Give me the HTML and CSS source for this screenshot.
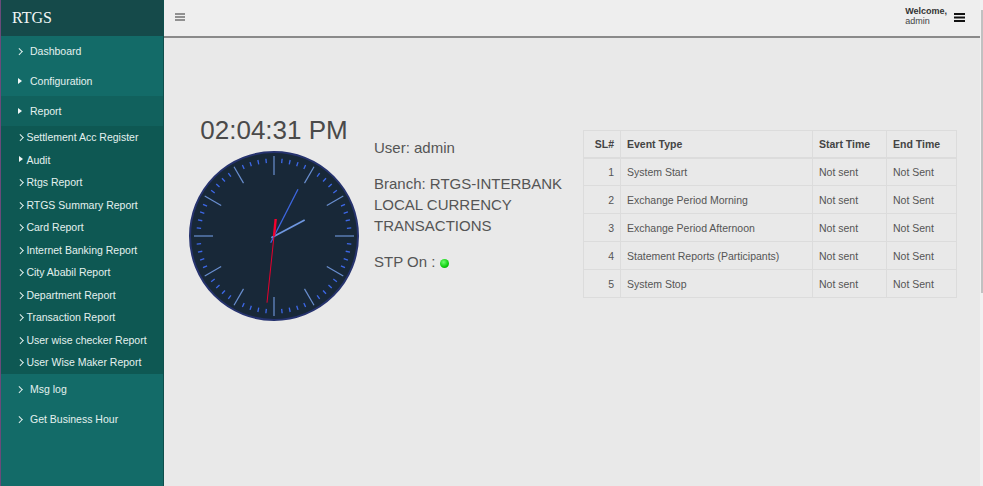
FILE: index.html
```html
<!DOCTYPE html>
<html>
<head>
<meta charset="utf-8">
<title>RTGS</title>
<link rel="stylesheet" href="styles.css">
</head>
<body>
<div class="app">
  <aside class="sidebar">
    <div class="brand">RTGS</div>
    <ul class="menu">
      <li class="item"><span class="chev"></span>Dashboard</li>
      <li class="item"><span class="tri"></span>Configuration</li>
      <li class="group">
        <div class="item"><span class="tri"></span>Report</div>
        <ul class="submenu">
          <li><span class="subchev"></span>Settlement Acc Register</li>
          <li><span class="subtri"></span>Audit</li>
          <li><span class="subchev"></span>Rtgs Report</li>
          <li><span class="subchev"></span>RTGS Summary Report</li>
          <li><span class="subchev"></span>Card Report</li>
          <li><span class="subchev"></span>Internet Banking Report</li>
          <li><span class="subchev"></span>City Ababil Report</li>
          <li><span class="subchev"></span>Department Report</li>
          <li><span class="subchev"></span>Transaction Report</li>
          <li><span class="subchev"></span>User wise checker Report</li>
          <li><span class="subchev"></span>User Wise Maker Report</li>
        </ul>
      </li>
      <li class="item"><span class="chev"></span>Msg log</li>
      <li class="item"><span class="chev"></span>Get Business Hour</li>
    </ul>
  </aside>
  <main class="main">
    <header class="topbar">
      <svg class="burger" width="10" height="8" viewBox="0 0 10 8"><path d="M0 1h10M0 4h10M0 7h10" stroke="#333" stroke-width="1.200"/></svg>
      <div class="welcome">
        <div class="welcome-text"><strong>Welcome,</strong><span>admin</span></div>
        <svg width="11" height="9" viewBox="0 0 11 9"><path d="M0 1h11M0 4.500h11M0 8h11" stroke="#111" stroke-width="1.800"/></svg>
      </div>
    </header>
    <section class="content">
      <div class="clock-col">
        <div class="time">02:04:31 PM</div>
        <svg class="clock" width="172" height="172" viewBox="-86 -86 172 172">
          <defs>
            <line id="minor" x1="0" y1="-77.700" x2="0" y2="-73.300" stroke="#3d68e8" stroke-width="1.300"/>
            <line id="major" x1="0" y1="-80" x2="0" y2="-61" stroke="#6a8fd0" stroke-width="1.200"/>
          </defs>
          <circle r="84" fill="#182838" stroke="#26336e" stroke-width="2"/>
          <use href="#major"/><use href="#major" transform="rotate(30)"/><use href="#major" transform="rotate(60)"/>
          <use href="#major" transform="rotate(90)"/><use href="#major" transform="rotate(120)"/><use href="#major" transform="rotate(150)"/>
          <use href="#major" transform="rotate(180)"/><use href="#major" transform="rotate(210)"/><use href="#major" transform="rotate(240)"/>
          <use href="#major" transform="rotate(270)"/><use href="#major" transform="rotate(300)"/><use href="#major" transform="rotate(330)"/>
          <use href="#minor" transform="rotate(6)"/><use href="#minor" transform="rotate(12)"/><use href="#minor" transform="rotate(18)"/><use href="#minor" transform="rotate(24)"/>
          <use href="#minor" transform="rotate(36)"/><use href="#minor" transform="rotate(42)"/><use href="#minor" transform="rotate(48)"/><use href="#minor" transform="rotate(54)"/>
          <use href="#minor" transform="rotate(66)"/><use href="#minor" transform="rotate(72)"/><use href="#minor" transform="rotate(78)"/><use href="#minor" transform="rotate(84)"/>
          <use href="#minor" transform="rotate(96)"/><use href="#minor" transform="rotate(102)"/><use href="#minor" transform="rotate(108)"/><use href="#minor" transform="rotate(114)"/>
          <use href="#minor" transform="rotate(126)"/><use href="#minor" transform="rotate(132)"/><use href="#minor" transform="rotate(138)"/><use href="#minor" transform="rotate(144)"/>
          <use href="#minor" transform="rotate(156)"/><use href="#minor" transform="rotate(162)"/><use href="#minor" transform="rotate(168)"/><use href="#minor" transform="rotate(174)"/>
          <use href="#minor" transform="rotate(186)"/><use href="#minor" transform="rotate(192)"/><use href="#minor" transform="rotate(198)"/><use href="#minor" transform="rotate(204)"/>
          <use href="#minor" transform="rotate(216)"/><use href="#minor" transform="rotate(222)"/><use href="#minor" transform="rotate(228)"/><use href="#minor" transform="rotate(234)"/>
          <use href="#minor" transform="rotate(246)"/><use href="#minor" transform="rotate(252)"/><use href="#minor" transform="rotate(258)"/><use href="#minor" transform="rotate(264)"/>
          <use href="#minor" transform="rotate(276)"/><use href="#minor" transform="rotate(282)"/><use href="#minor" transform="rotate(288)"/><use href="#minor" transform="rotate(294)"/>
          <use href="#minor" transform="rotate(306)"/><use href="#minor" transform="rotate(312)"/><use href="#minor" transform="rotate(318)"/><use href="#minor" transform="rotate(324)"/>
          <use href="#minor" transform="rotate(336)"/><use href="#minor" transform="rotate(342)"/><use href="#minor" transform="rotate(348)"/><use href="#minor" transform="rotate(354)"/>
          <line x1="-2.700" y1="1.700" x2="30.700" y2="-16" stroke="#6f97e0" stroke-width="1.800"/>
          <line x1="-3.300" y1="6.700" x2="24" y2="-46.700" stroke="#3d66e0" stroke-width="1.300"/>
          <line x1="0" y1="0" x2="-7" y2="66.700" stroke="#e8002d" stroke-width="1"/>
          <line x1="0" y1="0" x2="1.700" y2="-17" stroke="#f5002d" stroke-width="2.400"/>
        </svg>
      </div>
      <div class="info">
        <p>User: admin</p>
        <p>Branch: RTGS-INTERBANK LOCAL CURRENCY TRANSACTIONS</p>
        <p>STP On : <span class="led"></span></p>
      </div>
      <table class="events">
        <thead>
          <tr><th class="num">SL#</th><th class="type">Event Type</th><th class="start">Start Time</th><th>End Time</th></tr>
        </thead>
        <tbody>
          <tr><td class="num">1</td><td>System Start</td><td>Not sent</td><td>Not Sent</td></tr>
          <tr><td class="num">2</td><td>Exchange Period Morning</td><td>Not sent</td><td>Not Sent</td></tr>
          <tr><td class="num">3</td><td>Exchange Period Afternoon</td><td>Not sent</td><td>Not Sent</td></tr>
          <tr><td class="num">4</td><td>Statement Reports (Participants)</td><td>Not sent</td><td>Not Sent</td></tr>
          <tr><td class="num">5</td><td>System Stop</td><td>Not sent</td><td>Not Sent</td></tr>
        </tbody>
      </table>
    </section>
  </main>
  <div class="scrollbar"><div class="thumb"></div></div>
</div>
</body>
</html>
```
FILE: styles.css
```css
* { box-sizing: border-box; }
html, body { margin: 0; height: 100%; overflow: hidden; }
body { font-family: "Liberation Sans", Arial, sans-serif; background: #e9e9e9; color: #444; }
.app { display: flex; height: 486px; }

.sidebar { width: 164px; flex: none; background: #136b68; border-left: 1px solid #6a4a7a; border-right: 1px solid #0e4f4c; color: #e4f1ef; font-size: 10.500px; }
.brand { height: 36px; padding: 0 11px; background: #154a4a; font: 16px/35px "Liberation Serif", serif; color: #f2f7f6; }
.menu, .submenu { list-style: none; margin: 0; padding: 0; }
.item { display: flex; align-items: center; height: 30px; padding-left: 29px; position: relative; }
.chev, .tri, .subchev, .subtri { position: absolute; }
.chev { left: 15.500px; top: 13px; width: 4.500px; height: 4.500px; border-top: 1px solid #e4f1ef; border-right: 1px solid #e4f1ef; transform: rotate(45deg); }
.tri { left: 17px; top: 11.500px; width: 0; height: 0; border-left: 4px solid #f2f7f6; border-top: 3.500px solid transparent; border-bottom: 3.500px solid transparent; }
.group { background: #11615d; }
.submenu { background: #0e5853; }
.submenu li { position: relative; display: flex; align-items: center; height: 22.500px; padding-left: 25.400px; white-space: nowrap; }
.subchev { left: 16.500px; top: 9px; width: 4.500px; height: 4.500px; border-top: 1px solid #e4f1ef; border-right: 1px solid #e4f1ef; transform: rotate(45deg); }
.subtri { left: 18px; top: 7.500px; width: 0; height: 0; border-left: 4px solid #f2f7f6; border-top: 3.500px solid transparent; border-bottom: 3.500px solid transparent; }

.main { flex: 1; min-width: 0; display: flex; flex-direction: column; }
.topbar { height: 38px; flex: none; display: flex; align-items: center; justify-content: space-between; padding: 0 15px 2px 11px; background: #eeeeee; border-bottom: 2px solid #8a8a8a; }
.welcome { display: flex; align-items: center; gap: 7px; }
.welcome-text { display: flex; flex-direction: column; margin-top: -2px; font-size: 9px; line-height: 10px; color: #444; }
.welcome-text strong { color: #333; }

.content { flex: 1; display: flex; align-items: flex-start; padding: 77px 23px 0 26px; }
.clock-col { width: 168px; flex: none; display: flex; flex-direction: column; align-items: center; }
.time { font-size: 26px; line-height: 30px; white-space: nowrap; margin-bottom: 5px; color: #4a4a4a; }
.clock { display: block; flex: none; }

.info { width: 189px; flex: none; margin: 21.500px 0 0 16px; font-size: 15px; line-height: 21px; color: #555; }
.info p { margin: 0 0 15px; }
.led { display: inline-block; width: 9px; height: 9px; border-radius: 50%; background: radial-gradient(circle at 40% 35%, #6dff6d, #0ccc0c 60%, #078a07); vertical-align: -1px; }

.events { flex: none; margin: 15px 0 0 20px; width: 374px; table-layout: fixed; border-collapse: collapse; font-size: 10.500px; color: #555; }
.events th, .events td { border: 1px solid #dcdcdc; padding: 0 6px; height: 28px; text-align: left; white-space: nowrap; }
.events th { color: #444; height: 27px; border-bottom-width: 2px; }
.events .num { text-align: right; width: 37px; }
.events .type { width: 192px; }
.events .start { width: 74px; }

.scrollbar { width: 3px; flex: none; background: #f1f1f1; }
.thumb { width: 2px; height: 283px; margin: 10px 0 0 1px; background: #c1c1c1; }
```
